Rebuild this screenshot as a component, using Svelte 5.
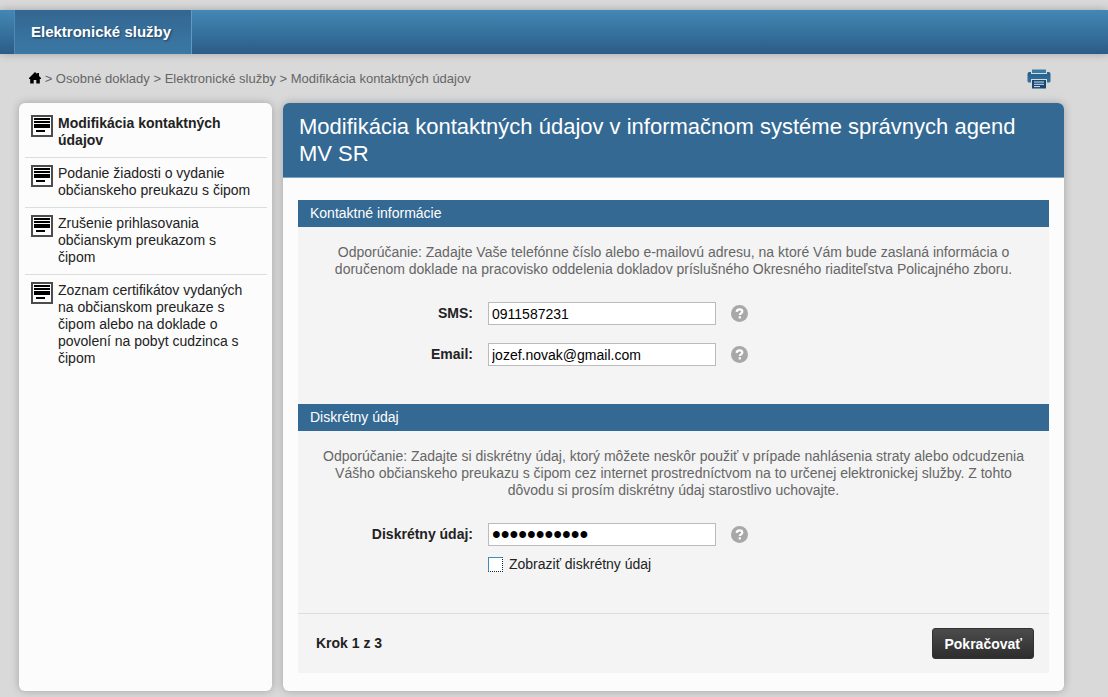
<script>
    let sms = $state("0911587231");
    let email = $state("jozef.novak@gmail.com");
    let diskretny = $state("tajneheslo1");
    let zobrazit = $state(false);

    const menu = [
        { text: "Modifikácia kontaktných údajov", aktivna: true },
        { text: "Podanie žiadosti o vydanie občianskeho preukazu s čipom" },
        { text: "Zrušenie prihlasovania občianskym preukazom s čipom" },
        { text: "Zoznam certifikátov vydaných na občianskom preukaze s čipom alebo na doklade o povolení na pobyt cudzinca s čipom" }
    ];

    const cesta = ["Osobné doklady", "Elektronické služby", "Modifikácia kontaktných údajov"];
</script>

{#snippet pomoc()}
    <button class="help" type="button" aria-label="Pomoc">
        <svg width="17" height="17" viewBox="0 0 18 18">
            <circle cx="9" cy="9" r="9" fill="#a8a8a8" />
            <path d="M6 7.300C6.100 5.500 7.300 4.600 9 4.600s3 .9 3 2.400c0 2-2.700 1.900-2.700 3.700" fill="none" stroke="#fff" stroke-width="2.300" />
            <rect x="8.100" y="11.900" width="2.400" height="2.300" fill="#fff" />
        </svg>
    </button>
{/snippet}

<nav class="topbar">
    <a class="tab" href="#sluzby">Elektronické služby</a>
</nav>

<div class="page">
    <div class="tools">
        <div class="breadcrumb">
            <a class="home" href="#domov" aria-label="Domov">
                <svg width="12" height="12" viewBox="0 0 12 12">
                    <path d="M6 0l2.200 2.100V1h1.800v2.900L12 6v1h-1.200v4.500H7.300V8H4.700v3.500H1.200V7H0V6z" fill="#000" />
                </svg>
            </a>
            {#each cesta as polozka}
                &gt; <a href="#cesta">{polozka}</a>{" "}
            {/each}
        </div>
        <button class="print" type="button" aria-label="Tlačiť">
            <svg width="24" height="20" viewBox="0 0 24 20">
                <defs>
                    <linearGradient id="tlac" x1="0" y1="0" x2="0" y2="1">
                        <stop offset="0" stop-color="#23608f" />
                        <stop offset="1" stop-color="#34719c" />
                    </linearGradient>
                </defs>
                <path d="M5 .5h14V4H5z" fill="#3a7aa6" />
                <path d="M2 3h2v2h16V3h2q1.500.5 1.500 2v7q0 1.500-1.500 1.500h-2V10H4v3.500H2Q.5 13.500.5 12V5q0-1.500 1.500-2z" fill="url(#tlac)" />
                <path d="M5 11h14v8.500H5z" fill="#174772" />
                <path d="M7 13h10M7 15.300h10M7 17.600h6" stroke="#dce6ee" stroke-width="1" />
            </svg>
        </button>
    </div>

    <div class="columns">
        <aside class="panel sidebar">
            <ul>
                {#each menu as m}
                    <li>
                        <svg class="doc" width="22" height="22" viewBox="0 0 22 22">
                            <rect x="1" y="1" width="20" height="20" fill="#fff" stroke="#4c4c4c" stroke-width="2" />
                            <path d="M3 4h16M3 7h16M5 16h9" stroke="#000" stroke-width="2" />
                            <path d="M3 11h16" stroke="#000" stroke-width="4" />
                        </svg>
                        <a href="#menu" class:aktivna={m.aktivna}>{m.text}</a>
                    </li>
                {/each}
            </ul>
        </aside>

        <main class="panel content">
            <h1>Modifikácia kontaktných údajov v informačnom systéme správnych agend MV SR</h1>

            <form>
                <section>
                    <h2>Kontaktné informácie</h2>
                    <p>Odporúčanie: Zadajte Vaše telefónne číslo alebo e-mailovú adresu, na ktoré Vám bude zaslaná informácia o doručenom doklade na pracovisko oddelenia dokladov príslušného Okresného riaditeľstva Policajného zboru.</p>
                    <div class="field">
                        <label for="sms">SMS:</label>
                        <input id="sms" type="text" bind:value={sms} />
                        {@render pomoc()}
                    </div>
                    <div class="field">
                        <label for="email">Email:</label>
                        <input id="email" type="text" bind:value={email} />
                        {@render pomoc()}
                    </div>
                </section>

                <section>
                    <h2>Diskrétny údaj</h2>
                    <p>Odporúčanie: Zadajte si diskrétny údaj, ktorý môžete neskôr použiť v prípade nahlásenia straty alebo odcudzenia Vášho občianskeho preukazu s čipom cez internet prostredníctvom na to určenej elektronickej služby. Z tohto dôvodu si prosím diskrétny údaj starostlivo uchovajte.</p>
                    <div class="field secret">
                        <label for="udaj">Diskrétny údaj:</label>
                        <input id="udaj" type={zobrazit ? "text" : "password"} bind:value={diskretny} />
                        {@render pomoc()}
                    </div>
                    <div class="check">
                        <input id="zobrazit" type="checkbox" bind:checked={zobrazit} />
                        <label for="zobrazit">Zobraziť diskrétny údaj</label>
                    </div>
                </section>

                <div class="steps">
                    <strong>Krok 1 z 3</strong>
                    <button class="next" type="button">Pokračovať</button>
                </div>
            </form>
        </main>
    </div>
</div>

<style>
    :global(body) {
        margin: 0;
        background: #d9d9d9;
        font-family: "Liberation Sans", Arial, sans-serif;
        font-size: 14px;
        line-height: 17px;
        color: #222;
    }

    a {
        color: inherit;
        text-decoration: none;
    }

    button {
        font-family: inherit;
        cursor: pointer;
    }

    .topbar {
        display: flex;
        height: 44px;
        margin-top: 10px;
        padding-left: 14px;
        background: linear-gradient(#4388b5, #2b5c87);
        box-shadow: 0 0 8px rgba(0, 0, 0, 0.25);
    }

    .tab {
        padding: 0 20px 0 16px;
        border-left: 1px solid #4c8ab5;
        border-right: 1px solid #5c9cc4;
        background: linear-gradient(#336791, #3c78a5);
        color: #fff;
        font-size: 15px;
        font-weight: bold;
        line-height: 44px;
        text-shadow: 1px 1px 2px #1c3f5e;
    }

    .page {
        padding: 0 44px 6px 19px;
    }

    .tools {
        display: flex;
        justify-content: space-between;
        align-items: center;
        height: 49px;
        padding: 0 13px 0 10px;
    }

    .breadcrumb {
        font-size: 13px;
        color: #666;
    }

    .home svg {
        display: inline-block;
        vertical-align: -1px;
    }

    .print,
    .help {
        display: flex;
        padding: 0;
        border: 0;
        background: none;
    }

    .columns {
        display: flex;
        gap: 11px;
        min-height: 588px;
    }

    .panel {
        border-radius: 6px;
        background: #fcfcfc;
        box-shadow: 0 0 8px rgba(0, 0, 0, 0.25);
    }

    .sidebar {
        flex: 0 0 253px;
    }

    ul {
        margin: 0;
        padding: 5px 5px 0 6px;
        list-style: none;
    }

    li {
        display: flex;
        align-items: flex-start;
        gap: 5px;
        padding: 7px 12px 8px 6px;
        border-bottom: 1px solid #ddd;
    }

    li:last-child {
        border-bottom: 0;
    }

    .doc {
        flex: none;
    }

    .aktivna {
        font-weight: bold;
    }

    .content {
        flex: 1;
        overflow: hidden;
    }

    h1 {
        margin: 0;
        padding: 10px 16px;
        border-bottom: 1px solid #7fa3c0;
        background: #346993;
        color: #fff;
        font-size: 22px;
        font-weight: normal;
        line-height: 27px;
    }

    form {
        margin: 22px 15px 18px;
        background: #f4f4f4;
    }

    section {
        padding-bottom: 38px;
    }

    h2 {
        margin: 0;
        padding: 0 12px;
        background: #346993;
        color: #fff;
        font-size: 14px;
        font-weight: normal;
        line-height: 27px;
    }

    p {
        margin: 17px 16px 24px;
        color: #666;
        text-align: center;
    }

    .field {
        display: flex;
        align-items: center;
        margin-bottom: 18px;
    }

    .field:last-child {
        margin-bottom: 0;
    }

    .field label {
        width: 175px;
        margin-right: 15px;
        font-weight: bold;
        text-align: right;
    }

    .field input {
        box-sizing: border-box;
        width: 228px;
        height: 23px;
        margin: 0 15px 0 0;
        padding: 0 3px;
        border: 1px solid #bbb;
        background: #fff;
        color: #000;
        font-family: inherit;
        font-size: 14px;
    }

    .field input[type="password"] {
        font-size: 25px;
    }

    .secret {
        margin-bottom: 10px;
    }

    .check {
        display: flex;
        align-items: center;
        gap: 6px;
        padding: 0 0 2px 190px;
    }

    .check input {
        appearance: none;
        box-sizing: border-box;
        width: 15px;
        height: 15px;
        margin: 0;
        border: 1px solid #3c8dbc;
        border-right: 1px dotted #123;
        border-bottom: 1px dotted #123;
        background: #fff;
    }

    .check input:checked {
        background: #346993;
        box-shadow: inset 0 0 0 3px #fff;
    }

    .steps {
        display: flex;
        justify-content: space-between;
        align-items: center;
        padding: 14px 15px 14px 18px;
        border-top: 1px solid #ddd;
    }

    .next {
        height: 31px;
        padding: 0 11px;
        border: 1px solid #333;
        border-radius: 3px;
        background: linear-gradient(#4c4c4c, #2d2d2d);
        color: #fff;
        font-size: 14px;
        font-weight: bold;
    }
</style>
